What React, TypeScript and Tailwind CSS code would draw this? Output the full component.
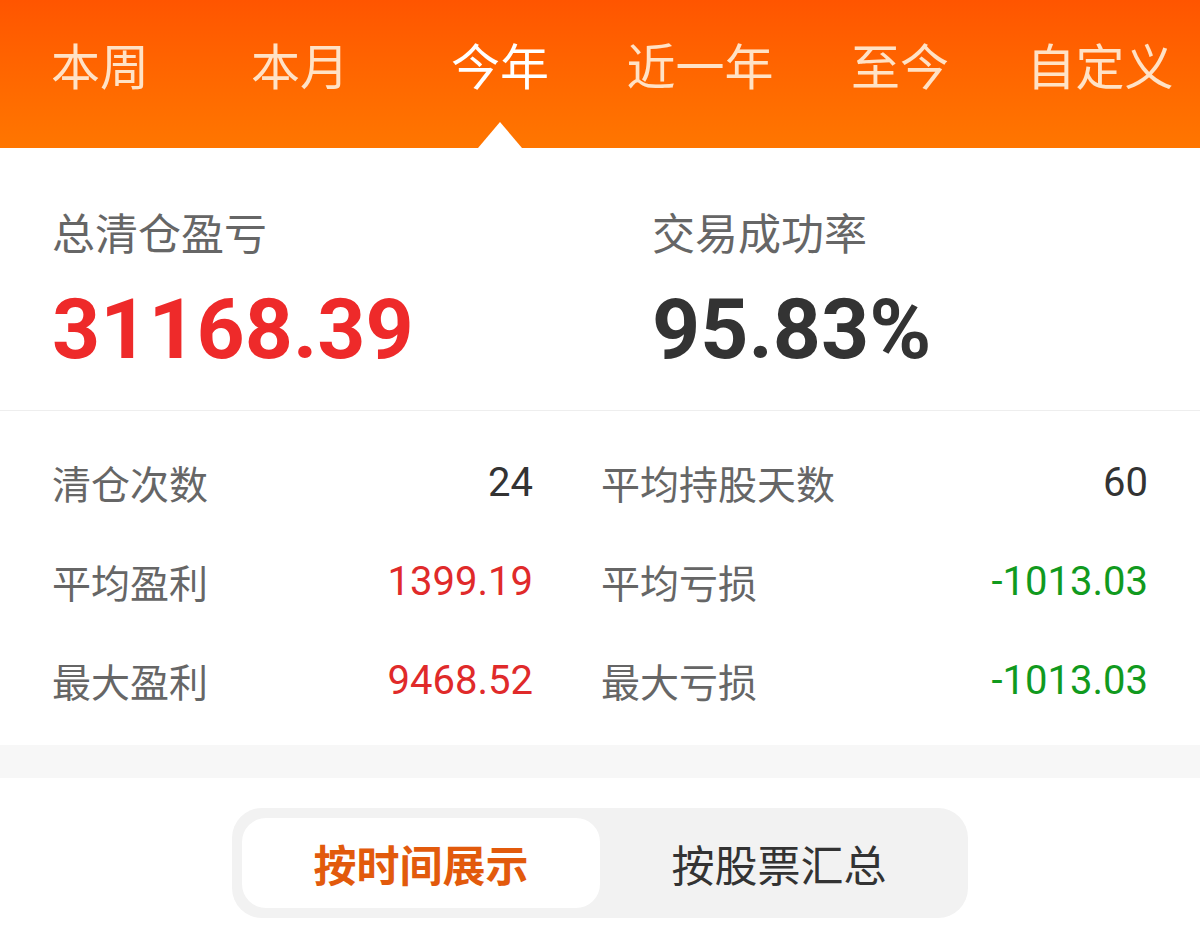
import React from 'react';

const tabs = ['本周', '本月', '今年', '近一年', '至今', '自定义'];

const cjk = { fontFamily: '"Noto Sans CJK SC", "Noto Sans", sans-serif' };
const num = { fontFamily: 'Roboto, "Noto Sans CJK SC", sans-serif' };

function Stat({ label, value, color }: { label: string; value: string; color: string }) {
  return (
    <div className="flex h-[99px] items-center justify-between">
      <span className="text-[39px] text-[#666666]" style={cjk}>
        {label}
      </span>
      <span className={`text-[40px] ${color}`} style={num}>
        {value}
      </span>
    </div>
  );
}

export default function App() {
  const active = 2;
  return (
    <div className="min-h-[946px] w-[1200px] bg-white" style={cjk}>
      {/* period tabs */}
      <div className="flex h-[148px] bg-gradient-to-b from-[#ff5500] to-[#ff7600]">
        {tabs.map((t, i) => (
          <div key={t} className="relative flex w-[200px] justify-center pt-[33px]">
            <span className={`text-[49px] leading-[62px] ${i === active ? 'text-white' : 'text-[#ffe2c6]'}`}>
              {t}
            </span>
            {i === active && (
              <div className="absolute bottom-0 left-1/2 h-0 w-0 -translate-x-1/2 border-x-[22px] border-b-[26px] border-x-transparent border-b-white" />
            )}
          </div>
        ))}
      </div>

      {/* totals */}
      <div className="flex h-[263px] border-b border-[#eeeeee]">
        <div className="w-[600px] pl-[52px] pt-[55px]">
          <div className="text-[43px] leading-[56px] text-[#666666]">总清仓盈亏</div>
          <div className="mt-[21px] text-[84px] font-bold leading-[100px] text-[#ee2a2a]" style={num}>
            31168.39
          </div>
        </div>
        <div className="flex-1 pl-[52px] pt-[55px]">
          <div className="text-[43px] leading-[56px] text-[#666666]">交易成功率</div>
          <div className="mt-[21px] text-[84px] font-bold leading-[100px] text-[#333333]" style={num}>
            95.83%
          </div>
        </div>
      </div>

      {/* detail stats */}
      <div className="flex px-[52px] pt-[22px] pb-[15px]">
        <div className="w-[481px]">
          <Stat label="清仓次数" value="24" color="text-[#333333]" />
          <Stat label="平均盈利" value="1399.19" color="text-[#e02a2a]" />
          <Stat label="最大盈利" value="9468.52" color="text-[#e02a2a]" />
        </div>
        <div className="ml-[68px] flex-1">
          <Stat label="平均持股天数" value="60" color="text-[#333333]" />
          <Stat label="平均亏损" value="-1013.03" color="text-[#119a1e]" />
          <Stat label="最大亏损" value="-1013.03" color="text-[#119a1e]" />
        </div>
      </div>

      <div className="h-[33px] bg-[#f7f7f7]" />

      {/* view switch */}
      <div className="flex justify-center pt-[30px]">
        <div className="flex h-[110px] w-[736px] rounded-[30px] bg-[#f2f2f2] p-[10px]">
          <div className="flex w-[358px] items-center justify-center rounded-[24px] bg-white text-[43px] font-bold text-[#e25a0c]">
            按时间展示
          </div>
          <div className="flex flex-1 items-center justify-center text-[43px] text-[#333333]">按股票汇总</div>
        </div>
      </div>
    </div>
  );
}
